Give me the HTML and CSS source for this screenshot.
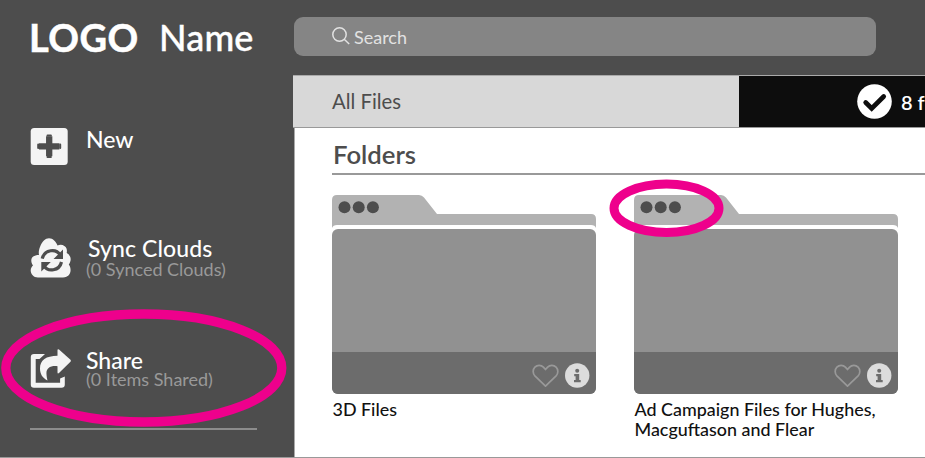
FILE: index.html
```html
<!DOCTYPE html>
<html lang="en">
<head>
<meta charset="utf-8">
<title>All Files</title>
<link rel="stylesheet" href="styles.css">
</head>
<body>
<svg class="defs" width="0" height="0">
  <symbol id="heart" viewBox="0 0 27 24"><path d="M13.5 22.2 2.9 11.8C.6 9.300.6 5.400 2.900 3.100c2.400-2.400 6.200-2.300 8.500 0l2.100 2.400 2.100-2.400c2.300-2.300 6.100-2.400 8.500 0 2.300 2.300 2.300 6.200 0 8.700z" fill="none" stroke="#999" stroke-width="1.700" stroke-linejoin="round"/></symbol>
  <symbol id="info" viewBox="0 0 25 25"><circle cx="12.200" cy="12.500" r="12.200" fill="#dcdcdc"/><circle cx="12.200" cy="7.700" r="2" fill="#6c6c6c"/><path d="M9.200 11h5v6h1.500v2.200H9V17h1.600v-3.800H9.200z" fill="#6c6c6c"/></symbol>
  <symbol id="folder-back" viewBox="0 0 264 36"><path d="M0 33V5q0-5 5-5h82q3 0 5 2.500L105 19h154q5 0 5 5v9q-1-3-5-3H5q-4 0-5 3z" fill="#b2b2b2"/><g fill="#4d4d4d"><circle cx="12.500" cy="12.300" r="6"/><circle cx="26.700" cy="12.300" r="6"/><circle cx="40.900" cy="12.300" r="6"/></g></symbol>
</svg>
<div class="app">
  <aside class="sidebar">
    <div class="brand"><span class="logo">LOGO</span><span class="name">Name</span></div>
    <nav class="nav">
      <div class="item new">
        <svg class="icon" width="42" height="40" viewBox="0 0 42 40"><rect x=".7" y="0" width="37" height="37" rx="3.500" fill="#f4f4f4"/><path d="M19.200 8.300v20M9 18.300h20.400" stroke="#4d4d4d" stroke-width="6.300"/><path d="M17.500 7.500h3.400M17.500 29h3.400M8.200 16.600v3.400M30.200 16.600v3.400" stroke="#4d4d4d" stroke-width="2" stroke-linecap="round"/></svg>
        <div class="text"><div class="label">New</div></div>
      </div>
      <div class="item sync">
        <svg class="icon" width="42" height="40" viewBox="0 0 42 40"><path d="M8 39.500C3.500 39.500.7 36 .7 32.500c0-2.500 1.300-4 2.300-5C-.6 22 1.500 17 9 17c-.7-3 .3-6.500 1-8C12 3 15.500.2 19 .2c4 0 7 3.300 8.500 7.300 4-2 8 .3 9 3 .5 1.500.5 3 .2 4.500C41 17.500 42 22 38.800 26.500c3.400 4.500 2.200 13-5.800 13z" fill="#f4f4f4"/><g fill="none" stroke="#4d4d4d" stroke-width="3.200"><path d="M12.200 20.700c2.200-9.500 14-10.500 18-3.700"/><path d="M31.500 24c-2.200 9-13.500 10.500-17.800 3.500"/></g><path d="M33 11.500v9.500h-9.500zM11.300 33.500V24h9.500z" fill="#4d4d4d"/></svg>
        <div class="text"><div class="label">Sync Clouds</div><div class="sub">(0 Synced Clouds)</div></div>
      </div>
      <div class="item share">
        <svg class="icon" width="42" height="40" viewBox="0 0 42 40"><path d="M15 5H4Q.8 5 .8 8v27.500q0 3.300 3.200 3.300h27.500q3.300 0 3.300-3.300V27.500l-4.700 2v4.300H5.700V10H9.500z" fill="#f4f4f4"/><path d="M27.500 1.200Q27.500-.5 29 .5L40.200 10.500q1.300 1.200 0 2.500L29 24q-1.500 1.200-1.500-.8v-6c-8-.7-11.500 2.500-11 8 .1 2 .5 4.500 1 6.300-5-2.500-7.500-6.500-7.500-12C10 11 16 7 27.500 6.800z" fill="#f4f4f4"/></svg>
        <div class="text"><div class="label">Share</div><div class="sub">(0 Items Shared)</div></div>
      </div>
    </nav>
    <div class="divider"></div>
    <svg class="ring share-ring" width="288" height="118" viewBox="0 0 288 118"><ellipse cx="143.800" cy="59" rx="138" ry="54" fill="none" stroke="#ee008c" stroke-width="9.300"/></svg>
  </aside>
  <main class="main">
    <header class="top">
      <div class="search">
        <svg width="18" height="18" viewBox="0 0 18 18" fill="none" stroke="#e2e2e2" stroke-width="1.500"><circle cx="7.500" cy="7.500" r="6.700"/><path d="m12.200 12.200 5 4.800"/></svg>
        <span class="placeholder">Search</span>
      </div>
    </header>
    <div class="bar">
      <div class="crumb"><span class="crumb-text">All Files</span></div>
      <div class="selection">
        <svg width="36" height="36" viewBox="0 0 36 36"><circle cx="17.500" cy="17.500" r="17.300" fill="#fff"/><path d="m8.700 18.500 6 6L26.700 12.500" fill="none" stroke="#0d0d0d" stroke-width="4.700" stroke-linecap="round"/></svg>
        <span class="count">8 f</span>
      </div>
    </div>
    <section class="content">
      <h2 class="heading"><span>Folders</span></h2>
      <div class="folders">
        <article class="folder">
          <svg class="back" width="264" height="36"><use href="#folder-back"/></svg>
          <div class="front"><div class="actions"><svg width="27" height="24"><use href="#heart"/></svg><svg width="25" height="25"><use href="#info"/></svg></div></div>
          <div class="title">3D Files</div>
        </article>
        <article class="folder">
          <svg class="back" width="264" height="36"><use href="#folder-back"/></svg>
          <div class="front"><div class="actions"><svg width="27" height="24"><use href="#heart"/></svg><svg width="25" height="25"><use href="#info"/></svg></div></div>
          <div class="title">Ad Campaign Files for Hughes,<br>Macguftason and Flear</div>
          <svg class="ring dots-ring" width="116" height="60" viewBox="0 0 116 60"><ellipse cx="58.500" cy="29.300" rx="52.500" ry="24.200" fill="none" stroke="#ee008c" stroke-width="9"/></svg>
        </article>
      </div>
    </section>
  </main>
</div>
</body>
</html>
```

FILE: styles.css
```css
* { box-sizing: border-box; }
body { margin: 0; font-family: Lato, "Liberation Sans", sans-serif; }
svg { display: block; flex: none; }
.defs { position: absolute; }
.app {
  display: grid;
  grid-template-columns: 293px 1fr;
  width: 925px;
  height: 458px;
  overflow: hidden;
  background: #4d4d4d;
  border-bottom: 1px solid #999;
}
.sidebar { position: relative; padding: 16px 0 0 30px; }
.brand { display: flex; height: 44px; margin-left: -1px; line-height: 43px; color: #fff; white-space: nowrap; }
.logo { width: 130px; font-size: 38px; font-weight: 700; letter-spacing: 0.5px; -webkit-text-stroke: 0.5px #fff; }
.name { font-size: 36px; font-weight: 500; letter-spacing: 0.2px; -webkit-text-stroke: 0.4px #fff; }
.nav { padding-top: 66px; }
.item { display: flex; height: 110px; }
.icon { margin-right: 14px; }
.new, .sync { padding-top: 2px; }
.share { padding-top: 3px; height: 82px; }
.text { white-space: nowrap; }
.label { line-height: 22px; font-size: 23px; font-weight: 500; color: #fff; }
.sync .label { margin-top: -1px; padding-left: 2px; letter-spacing: 0.1px; }
.sync .sub { margin-top: 2px; }
.sub { line-height: 17px; font-size: 18px; color: #999; }
.divider { width: 227px; height: 2px; background: #8c8c8c; }
.ring { position: absolute; }
.share-ring { left: 0; top: 309px; }
.main { min-width: 0; overflow: hidden; }
.top { height: 75px; padding: 17px 0 0 1px; }
.search {
  display: flex;
  align-items: center;
  width: 582px;
  height: 39px;
  padding-left: 38px;
  border-radius: 9px;
  background: #858585;
}
.search svg { margin-bottom: 2px; }
.placeholder { margin: 1px 0 0 4px; line-height: 22px; font-size: 18px; color: #e2e2e2; }
.bar { display: flex; height: 53px; border-top: 1px solid #aaa; border-bottom: 1px solid #999; }
.crumb { width: 446px; padding-left: 39px; line-height: 50px; font-size: 20.3px; color: #4d4d4d; background: #d8d8d8; }
.selection {
  display: flex;
  align-items: center;
  flex: 1;
  min-width: 0;
  padding-left: 118px;
  color: #fff;
  background: #0d0d0d;
  overflow: hidden;
}
.count { margin: 0 0 0 8px; font-size: 20px; font-weight: 600; white-space: nowrap; }
.content { height: 329px; margin-left: 1px; border-left: 1px solid #aaa; padding-left: 37px; background: #fff; }
.heading {
  height: 47px;
  margin: 0 0 20px;
  padding: 11px 0 0 1px;
  border-bottom: 2px solid #999;
  line-height: 30px;
  font-size: 25.7px;
  font-weight: 600;
  color: #4d4d4d;
}
.folders { display: flex; gap: 38px; }
.folder { position: relative; flex: none; width: 264px; }
.front {
  display: flex;
  flex-direction: column;
  justify-content: flex-end;
  height: 165px;
  margin-top: -2px;
  border-radius: 6px;
  background: #919191;
  overflow: hidden;
}
.actions {
  display: flex;
  align-items: center;
  gap: 6px;
  height: 42px;
  padding: 5px 0 0 200px;
  background: #6c6c6c;
}
.title { margin-top: 5px; padding-left: 0.5px; line-height: 20px; font-size: 17.9px; font-weight: 500; color: #111; white-space: nowrap; }
.dots-ring { left: -26px; top: -16px; }
```
